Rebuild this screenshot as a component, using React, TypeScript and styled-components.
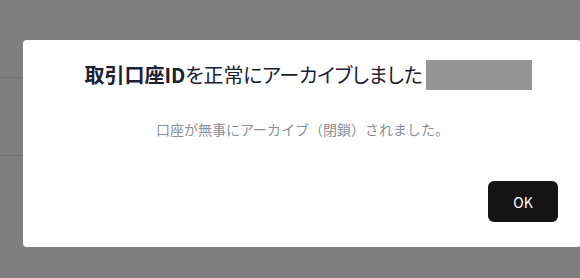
import React from 'react'
import styled, { createGlobalStyle } from 'styled-components'

const GlobalStyle = createGlobalStyle`
  html, body {
    margin: 0;
    padding: 0;
    background: #ffffff;
    font-family: "Noto Sans CJK JP", "Noto Sans", sans-serif;
  }
`

const Page = styled.div`
  width: 580px;
  height: 278px;
  overflow: hidden;
  background: #ffffff;
`

const Row = styled.div<{ $last?: boolean }>`
  height: 78px;
  border-bottom: 1px solid ${(p) => (p.$last ? 'transparent' : '#e8e8e8')};
  box-sizing: border-box;
`

const Overlay = styled.div`
  position: fixed;
  inset: 0;
  background: rgba(0, 0, 0, 0.5);
`

const Modal = styled.div`
  position: fixed;
  left: 23px;
  top: 40px;
  width: 558px;
  height: 207px;
  box-sizing: border-box;
  background: #ffffff;
  border-radius: 4px;
  padding: 20px 23px 25px 24px;
  display: flex;
  flex-direction: column;
  align-items: center;
`

const Title = styled.h2`
  margin: 0 0 0 11px;
  font-size: 20px;
  line-height: 30px;
  font-weight: 400;
  color: #1b2033;
  white-space: nowrap;
  display: flex;
  align-items: center;
  gap: 3px;
  font-feature-settings: "palt";
  letter-spacing: -0.2px;
`

const Strong = styled.b`
  font-weight: 700;
  font-feature-settings: normal;
  letter-spacing: 0;
`

const Redacted = styled.span`
  display: inline-block;
  width: 106px;
  height: 30px;
  background: #959595;
`

const Message = styled.p`
  margin: 29px 0 0;
  font-size: 14px;
  line-height: 20px;
  color: #8b8f97;
`

const Footer = styled.div`
  margin-top: auto;
  align-self: stretch;
  display: flex;
  justify-content: flex-end;
`

const OkButton = styled.button`
  width: 70px;
  height: 41px;
  border: none;
  border-radius: 6px;
  background: #141414;
  color: #ffffff;
  font-family: "Noto Sans CJK JP", "Noto Sans", sans-serif;
  font-size: 14px;
  font-weight: 400;
  cursor: pointer;
`

export default function App() {
  return (
    <>
      <GlobalStyle />
      <Page>
        <Row />
        <Row />
        <Row $last />
      </Page>
      <Overlay />
      <Modal>
        <Title>
          <span>
            <Strong>取引口座ID</Strong>を正常にアーカイブしました
          </span>
          <Redacted />
        </Title>
        <Message>口座が無事にアーカイブ（閉鎖）されました。</Message>
        <Footer>
          <OkButton>OK</OkButton>
        </Footer>
      </Modal>
    </>
  )
}
